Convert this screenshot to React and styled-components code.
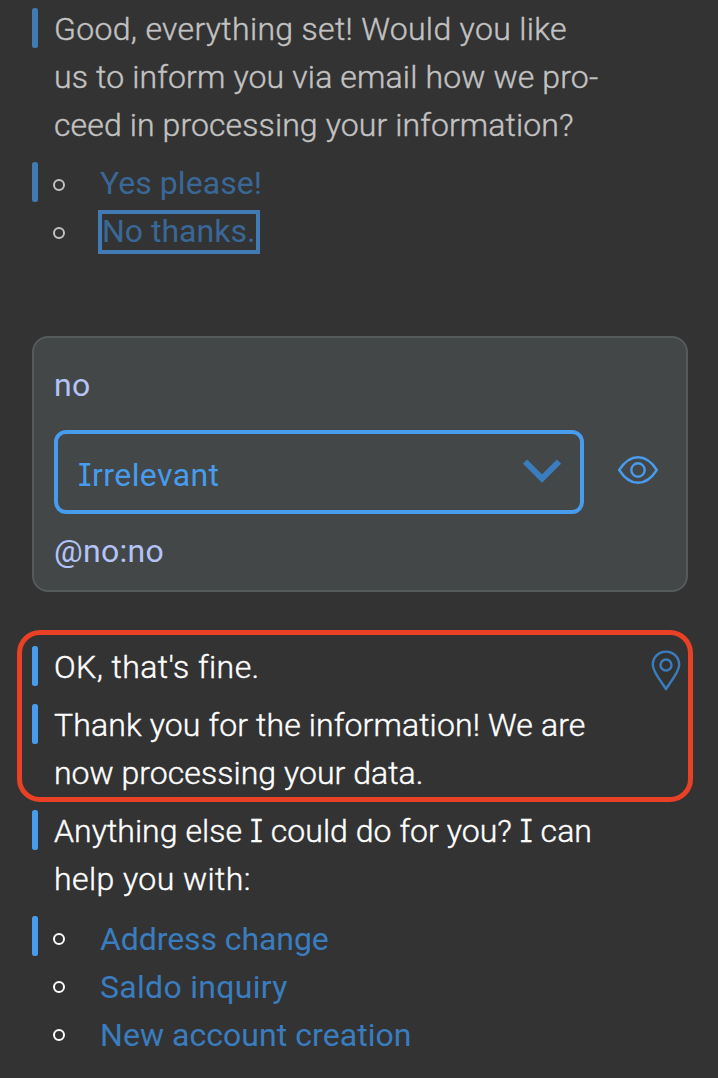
import React from 'react';
import styled, { createGlobalStyle } from 'styled-components';

const GlobalStyle = createGlobalStyle`
  *, *::before, *::after { box-sizing: border-box; }
  body { margin: 0; background: #333333; }
`;

const Page = styled.main`
  width: 718px;
  height: 1078px;
  overflow: hidden;
  padding: 5px 25px 0 32px;
  background: #333333;
  color: #ffffff;
  font-family: Roboto, "Liberation Sans", sans-serif;
  font-size: 32px;
  font-weight: 300;
  line-height: 48px;
`;

const Thread = styled.section`
  display: flex;
  flex-direction: column;
  gap: 10px;
  color: ${p => (p.$dim ? '#c2c2c2' : '#ffffff')};
  --bar: ${p => (p.$dim ? '#407bb3' : '#479ced')};
  --link: ${p => (p.$dim ? '#396896' : '#3a7dbf')};
`;

const Message = styled.div`
  display: flex;
  align-items: flex-start;
  gap: 16px;

  &::before {
    content: '';
    flex: none;
    width: 6px;
    height: 40px;
    margin-top: 3px;
    border-radius: 2.5px;
    background: var(--bar);
  }
`;

const Body = styled.div`
  flex: 1;
`;

const Line = styled.div`
  white-space: nowrap;
  letter-spacing: ${p => p.$track || 0}px;
  -webkit-text-stroke: 0.4px currentColor;
`;

const SlabI = styled.span`
  font-family: Inter, sans-serif;
  font-size: 31px;
  font-feature-settings: "cv08";
  line-height: 1;
`;

const Choices = styled.ul`
  flex: 1;
  margin: 0;
  padding: 0;
  list-style: none;
`;

const Choice = styled.li`
  display: flex;
  align-items: flex-start;
  height: 48px;

  &::before {
    content: '';
    flex: none;
    width: 12px;
    height: 12px;
    margin: 20px 33px 0 -1px;
    border: 2px solid currentColor;
    border-radius: 50%;
  }
`;

const ChoiceLink = styled.a`
  margin-top: ${p => p.$drop || 0}px;
  margin-left: 2px;
  color: var(--link);
  font-weight: 400;
  letter-spacing: ${p => p.$track || 0}px;
  white-space: nowrap;
`;

const PickedLink = styled(ChoiceLink)`
  width: 162px;
  height: 44px;
  margin: 3px 0 0 0;
  border: 4px solid var(--bar);
  line-height: 34px;
  padding-left: 0;
`;

const AnswerPanel = styled.section`
  width: 656px;
  height: 256px;
  margin: 81px 0 38px;
  padding: 23px 20px 0;
  border: 2px solid #555a5a;
  border-radius: 16px;
  background: #444747;
`;

const Utterance = styled.div`
  color: #b3c3f8;
  font-weight: 400;
  letter-spacing: ${p => p.$track}px;
`;

const IntentRow = styled.div`
  display: flex;
  align-items: center;
  margin: 21px 0 13px;
`;

const IntentSelect = styled.button`
  display: flex;
  align-items: center;
  justify-content: space-between;
  width: 530px;
  height: 84px;
  padding: 5px 19px 0 20px;
  border: 4px solid #479ced;
  border-radius: 12px;
  background: transparent;
  color: #479ced;
  font: inherit;
  font-weight: 400;
  letter-spacing: 0.4px;
`;

const ChevronIcon = styled.svg`
  width: 38px;
  height: 24px;
  margin-top: -8px;
`;

const EyeIcon = styled.svg`
  width: 40px;
  height: 28px;
  margin: -4px 0 0 34px;
`;

const Highlight = styled.div`
  display: flex;
  align-items: flex-start;
  width: 676px;
  height: 172px;
  margin: 0 0 -5px -15px;
  padding: 8px 7px 0 10px;
  border: 5px solid #ea4025;
  border-radius: 23px;
`;

const HighlightMessages = styled.div`
  display: flex;
  flex: 1;
  flex-direction: column;
  gap: 10px;
`;

const PinIcon = styled.svg`
  flex: none;
  width: 30px;
  height: 41px;
  margin-top: 6.5px;
`;

export default function App() {
  return (
    <>
      <GlobalStyle />
      <Page>
        <Thread $dim>
          <Message>
            <Body>
              <Line $track={0.32}>Good, everything set! Would you like</Line>
              <Line $track={0.14}>us to inform you via email how we pro-</Line>
              <Line $track={0.1}>ceed in processing your information?</Line>
            </Body>
          </Message>
          <Message>
            <Choices>
              <Choice><ChoiceLink $track={0.05}>Yes please!</ChoiceLink></Choice>
              <Choice><PickedLink>No thanks.</PickedLink></Choice>
            </Choices>
          </Message>
        </Thread>

        <AnswerPanel>
          <Utterance $track={0.3}>no</Utterance>
          <IntentRow>
            <IntentSelect>
              <span><SlabI>I</SlabI>rrelevant</span>
              <ChevronIcon viewBox="0 0 38 24" fill="none" stroke="#3a7dbf" strokeWidth="6">
                <path d="M2 2.5 19 19.5 36 2.5" />
              </ChevronIcon>
            </IntentSelect>
            <EyeIcon viewBox="0 0 40 28" fill="none" stroke="#479ced" strokeWidth="2.4">
              <path d="M1.2 14C6 6.5 12 1.2 20 1.2S34 6.5 38.8 14C34 21.5 28 26.8 20 26.8S6 21.5 1.2 14Z" strokeLinejoin="round" />
              <circle cx="20" cy="14" r="6.7" />
            </EyeIcon>
          </IntentRow>
          <Utterance $track={0.3}>@no:no</Utterance>
        </AnswerPanel>

        <Thread>
          <Highlight>
            <HighlightMessages>
              <Message>
                <Body><Line $track={0.42}>OK, that's fine.</Line></Body>
              </Message>
              <Message>
                <Body>
                  <Line $track={0.12}>Thank you for the information! We are</Line>
                  <Line $track={0.03}>now processing your data.</Line>
                </Body>
              </Message>
            </HighlightMessages>
            <PinIcon viewBox="0 0 30 41" fill="none" stroke="#3a7dbf" strokeWidth="2.4">
              <path d="M15 39.2C13.4 35.5 1.8 22.8 1.8 14.8A13.2 13.2 0 0 1 28.2 14.8C28.2 22.8 16.6 35.5 15 39.2Z" strokeLinejoin="round" />
              <circle cx="15" cy="15" r="5.5" />
            </PinIcon>
          </Highlight>
          <Message>
            <Body>
              <Line $track={0.04}>Anything else <SlabI>I</SlabI> could do for you? <SlabI>I</SlabI> can</Line>
              <Line $track={0.42}>help you with:</Line>
            </Body>
          </Message>
          <Message>
            <Choices>
              <Choice><ChoiceLink $drop={2} $track={-0.08}>Address change</ChoiceLink></Choice>
              <Choice><ChoiceLink $drop={2} $track={0.3}>Saldo inquiry</ChoiceLink></Choice>
              <Choice><ChoiceLink $drop={2} $track={0.05}>New account creation</ChoiceLink></Choice>
            </Choices>
          </Message>
        </Thread>
      </Page>
    </>
  );
}
